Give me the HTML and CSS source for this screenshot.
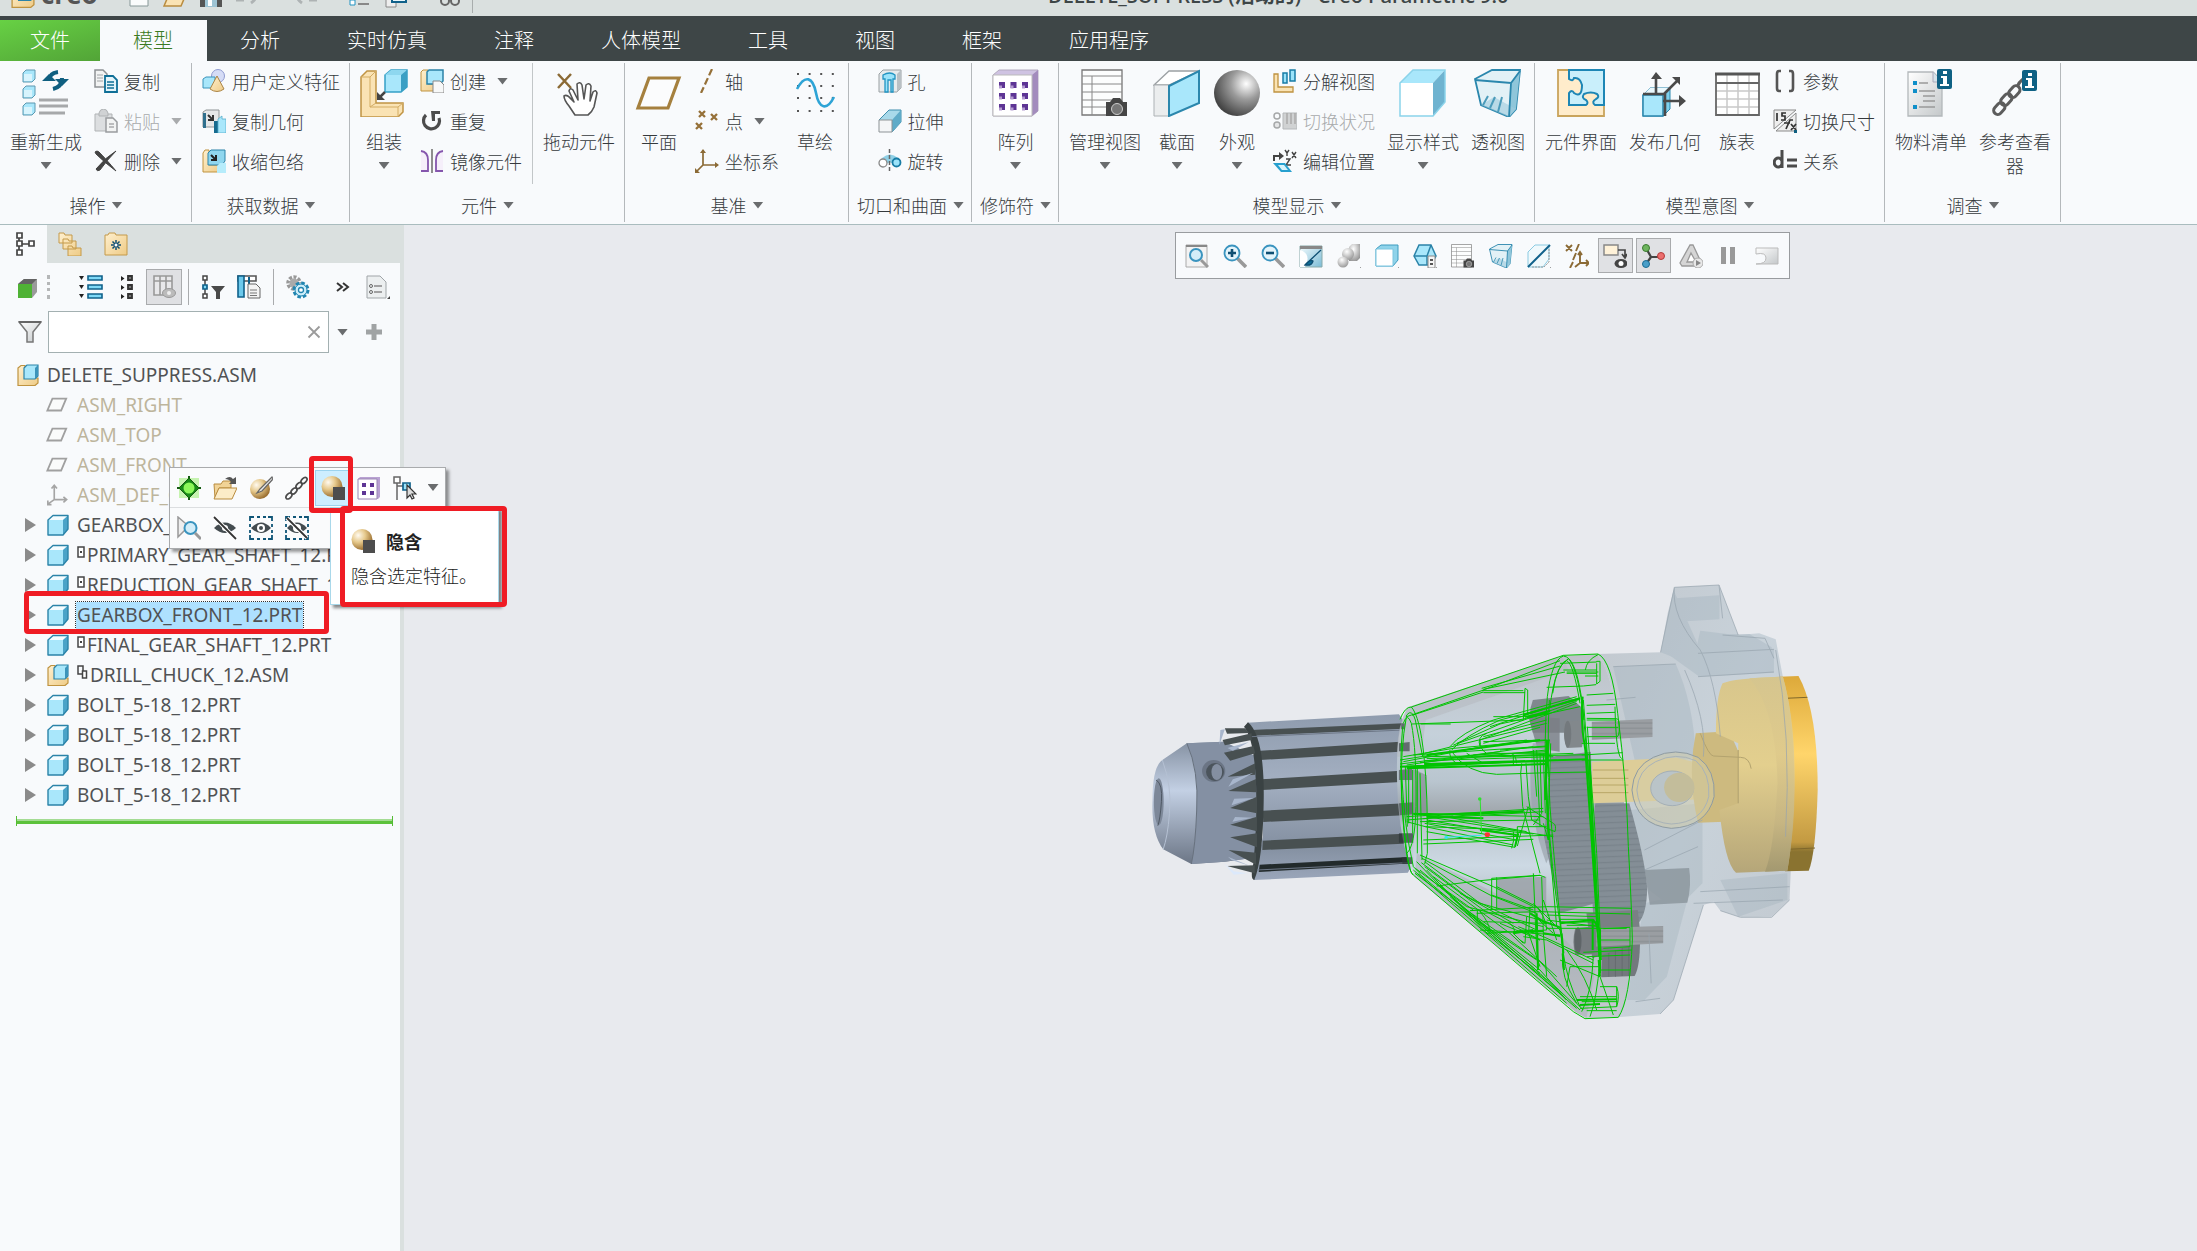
FILE: index.html
```html
<!DOCTYPE html>
<html lang="zh-CN">
<head>
<meta charset="utf-8">
<title>DELETE_SUPPRESS (活动的) - Creo Parametric 9.0</title>
<link rel="stylesheet" href="styles.css">
</head>
<body>
<svg class="defs" aria-hidden="true">
<defs>
<linearGradient id="gGold" x1="0" y1="0" x2="1" y2="1"><stop offset="0" stop-color="#fff0cf"/><stop offset="1" stop-color="#eecb86"/></linearGradient>
<linearGradient id="gGrey" x1="0" y1="0" x2="1" y2="1"><stop offset="0" stop-color="#fff"/><stop offset="1" stop-color="#c4c8ca"/></linearGradient>
<linearGradient id="gBlue" x1="0" y1="0" x2="1" y2="1"><stop offset="0" stop-color="#f4fbfd"/><stop offset="1" stop-color="#7bbcd6"/></linearGradient>
<radialGradient id="gBall" cx=".7" cy=".3" r=".75"><stop offset="0" stop-color="#fff"/><stop offset=".45" stop-color="#9b9b9b"/><stop offset="1" stop-color="#444"/></radialGradient>
<radialGradient id="gGoldBall" cx=".32" cy=".3" r=".75"><stop offset="0" stop-color="#fffaf0"/><stop offset=".45" stop-color="#e6c98c"/><stop offset="1" stop-color="#96692a"/></radialGradient>
<radialGradient id="gSoftBall" cx=".4" cy=".3" r=".8"><stop offset="0" stop-color="#fff"/><stop offset="1" stop-color="#8d8d8d"/></radialGradient>

<symbol id="part" viewBox="0 0 22 22"><path d="M1 6 6 1.500H21V15l-5 6H1z" fill="#a9e7fb"/><path d="M1 6 6 1.500H21L16 6z" fill="#f4fcff"/><path d="M16 6l5-4.500V15l-5 6z" fill="#4aa3c8"/><path d="M1 6 6 1.500H21V15l-5 6H1z" fill="none" stroke="#2b83a8" stroke-width="1.400" stroke-linejoin="round"/></symbol>
<symbol id="asm" viewBox="0 0 22 22"><path d="M1 4 4 1.500h4V14h13v5l-3 2.500H1z" fill="url(#gGold)" stroke="#bf9340" stroke-width="1.200"/><path d="M7 4l3-3h11v11l-3 3H7z" fill="#a9e7fb" stroke="#2b83a8" stroke-width="1.200"/><path d="M18 4l3-3v11l-3 3z" fill="#3b94bb"/></symbol>
<symbol id="plane" viewBox="0 0 24 24"><path d="M7 5h15l-5.500 13H1.500z" fill="#fafbfb" stroke="#a0a0a0" stroke-width="2"/></symbol>
<symbol id="csys-grey" viewBox="0 0 24 24"><path d="M9 2v15h13M9 17l-7 5M6 5l3-3.500L12 5M19 14l3.500 3-3.500 3M2 18v4.500h4" fill="none" stroke="#a5a5a5" stroke-width="1.800"/></symbol>
<symbol id="mk1" viewBox="0 0 8 12"><path d="M1 1h6v10H1z" fill="#fff" stroke="#444" stroke-width="1.500"/><path d="M3 5h2v2H3z" fill="#444"/></symbol>
<symbol id="mk2" viewBox="0 0 11 14"><path d="M1 1h5v8H1z" fill="none" stroke="#444" stroke-width="1.500"/><path d="M5.500 6h4v7h-4z" fill="#fff" stroke="#444" stroke-width="1.500"/></symbol>

<symbol id="regen" viewBox="0 0 48 48"><g fill="#a9e7fb" stroke="#5c98b0" stroke-width="1"><path d="M1 4l3-3h9v9l-3 3H1zM1 20l3-3h9v9l-3 3H1zM1 37l3-3h9v9l-3 3H1z"/></g><g fill="#fff"><path d="M2 5h8v7H2zM2 21h8v7H2zM2 38h8v7H2z" opacity=".55"/></g><path d="M17 31h29M17 37h29M17 44h26" stroke="#a6a8aa" stroke-width="3"/><g fill="none" stroke="#0f5f80" stroke-width="4"><path d="M27 12q0-8 9-9"/><path d="M40 9q0 9-9 11"/></g><path d="M20 12h14l-7-7zM33 10h14l-7 7z" fill="#0f5f80"/></symbol>
<symbol id="copy" viewBox="0 0 24 24"><path d="M1 1h8l4 4v13H1z" fill="#f2f3f3" stroke="#8d9194" stroke-width="1.500"/><path d="M3 6h6M3 9h6M3 12h6" stroke="#a0a4a6"/><path d="M11 7h8l4 4v12H11z" fill="#e3f4fa" stroke="#0f6f97" stroke-width="1.800"/><path d="M13 13h7M13 16h7M13 19h7" stroke="#0f6f97" stroke-width="1.300"/></symbol>
<symbol id="paste" viewBox="0 0 24 24"><path d="M1 5h17v17H1z" fill="#dcdee0" stroke="#b0b3b5"/><path d="M5 4q1-4 4.500-4T14 4v3H5z" fill="#d0d2d4" stroke="#b0b3b5"/><path d="M12 9h7l4 4v10H12z" fill="#f2f3f3" stroke="#999c9f" stroke-width="1.500"/><path d="M15 15h5M15 18h5" stroke="#a9abad" stroke-width="1.500"/></symbol>
<symbol id="del" viewBox="0 0 24 24"><path d="M1 3q2-2 4 0 7 7 17 19Q10 13 2 5z" fill="#444" stroke="#444"/><path d="M22 2Q12 8 2 20q1 3 4 1Q13 11 22 2z" fill="#444" stroke="#444"/></symbol>
<symbol id="udf" viewBox="0 0 24 24"><circle cx="16" cy="7" r="6.500" fill="#d5dcf6" stroke="#8f9bd0"/><path d="M1 10l3-2h9v11H1z" fill="#a9e7fb" stroke="#3b94bb"/><path d="M15 7l7 13q-7 5-14 0z" fill="url(#gGold)" stroke="#ab8445"/></symbol>
<symbol id="cgeom" viewBox="0 0 24 24"><path d="M1 3l3-2h13v17H1z" fill="#e5e7e8" stroke="#8f9496"/><path d="M1 4h3v15H1z" fill="#2f6f8d"/><path d="M6 6l5 5m0-5v5H6" stroke="#333" stroke-width="2" fill="none"/><path d="M12 12h4v12h-4z" fill="#176b8f"/><path d="M16 10l4-3v3h4v14h-8z" fill="#a9e7fb" stroke="#55adcb" stroke-width=".8"/></symbol>
<symbol id="shrink" viewBox="0 0 24 24"><path d="M1 4l2-3h4v15h12v7H1z" fill="url(#gGold)" stroke="#bf9340"/><path d="M6 4l3-3h14v11l-3 4H6z" fill="#8fd6ee" stroke="#2b83a8"/><path d="M9 6l5 5m0-5v5H9" stroke="#222" stroke-width="2" fill="none"/><path d="M15 17l3-3h6v10h-9z" fill="#b6ecfb"/></symbol>
<symbol id="assemble" viewBox="0 0 48 48"><path d="M1 8l6-6h9v32h27v9l-5 5H1z" fill="#fae3b4" stroke="#c09443" stroke-width="1.500"/><path d="M1 8h9l6-6M10 8v30l6-4M10 38h28l5-4M38 38v10" fill="none" stroke="#d3ac63"/><path d="M25 6l6-5h16v17l-6 5H25z" fill="#a9e7fb" stroke="#35a0c6" stroke-width="1.500"/><path d="M25 6l6-5h16l-6 5z" fill="#8ed7ef"/><path d="M41 6l6-5v17l-6 5z" fill="#3a9fc4"/><path d="M25 23l-6 6" stroke="#444" stroke-width="2.500"/><path d="M17 23v8h8z" fill="#444"/></symbol>
<symbol id="create" viewBox="0 0 24 24"><path d="M1 3l2-2h5v14h12v7H1z" fill="url(#gGold)" stroke="#bf9340"/><path d="M7 3l2-2h14v11l-3 3H7z" fill="#a9e7fb" stroke="#2b83a8" stroke-width="1.500"/><path d="M13 12h7l4 4v8H13z" fill="#f7f8f8" stroke="#888"/></symbol>
<symbol id="repeat" viewBox="0 0 24 24"><path d="M6 6a8 8 0 1 0 13 3" fill="none" stroke="#4c4c4c" stroke-width="3.200"/><path d="M11 2h9v3h-5v7h-3z" fill="#4c4c4c"/></symbol>
<symbol id="mirror" viewBox="0 0 24 24"><path d="M12 0v24" stroke="#8e8e8e" stroke-width="2"/><path d="M1 2q7 1 7 9v11H1M23 2q-7 1-7 9v11h7" fill="#f5effa" stroke="#8556ad" stroke-width="1.800"/></symbol>
<symbol id="drag" viewBox="0 0 48 48"><path d="M3 5l13 14M16 5L3 19" stroke="#8b6a35" stroke-width="2.500"/><path d="M20 46l-6-9q-5-6-5-10 3-2 7 3l3 3-5-11q1-4 4-1l5 10-1-16q3-3 5 1l2 14 2-14q3-3 5 1l-1 15 3-9q3-3 4 1l-3 14q-2 5-6 8z" fill="#fff" stroke="#555" stroke-width="1.600" stroke-linejoin="round"/></symbol>
<symbol id="bigplane" viewBox="0 0 48 48"><path d="M14 9h30L33 39H3z" fill="#fbfcfd" stroke="#a5803e" stroke-width="3.200"/></symbol>
<symbol id="axis" viewBox="0 0 24 24"><path d="M17 0L6 24" stroke="#957038" stroke-width="2.200" stroke-dasharray="7 3"/></symbol>
<symbol id="points" viewBox="0 0 24 24"><path d="M4 2l6 6m0-6L4 8M16 5l6 6m0-6l-6 6M1 14l6 6m0-6l-6 6" stroke="#957038" stroke-width="2.300"/></symbol>
<symbol id="csys" viewBox="0 0 24 24"><path d="M8 1v15h15M8 16l-7 7" fill="none" stroke="#8b6a35" stroke-width="1.700"/><path d="M5 4l3-4 3 4zM20 13l4 3-4 3zM0 19v5h5z" fill="#8b6a35"/></symbol>
<symbol id="sketch" viewBox="0 0 48 48"><path d="M6 5h37M6 17h37M6 29h37M6 42h37" stroke="#555" stroke-width="2" stroke-dasharray="2 9.600"/><path d="M6 20C14 5 22 8 25 24s11 18 18 4" fill="none" stroke="#2ea4d6" stroke-width="2.600"/></symbol>
<symbol id="hole" viewBox="0 0 24 24"><path d="M1 5l4-4h18v18l-4 4H1z" fill="#e7ebed" stroke="#9aa0a3"/><path d="M19 5l4-4v18l-4 4z" fill="#b9c0c4"/><path d="M5 6q7-4 12 0v4h-2v13h-2V11h-3v12H7V10H5z" fill="#9be3fa" stroke="#2294c2" stroke-width="1.300"/></symbol>
<symbol id="extrude" viewBox="0 0 24 24"><path d="M1 11L11 1h12v12L14 23z" fill="#a8d9ea" stroke="#3f8fae"/><path d="M14 11l9-10v12l-9 10z" fill="#5fabc8"/><path d="M1 11h13v12H1z" fill="#f4f6f7" stroke="#8d9396"/></symbol>
<symbol id="revolve" viewBox="0 0 24 24"><path d="M4 9q8-7 16 0v8q-8-7-16 0z" fill="#8fd0e6"/><path d="M11.500 0v24" stroke="#666" stroke-width="1.500" stroke-dasharray="4 2"/><circle cx="5" cy="14" r="4" fill="#fff" stroke="#888" stroke-width="1.300"/><circle cx="18.500" cy="13.500" r="4" fill="#9be3fa" stroke="#187ca5" stroke-width="1.800"/></symbol>
<symbol id="pattern" viewBox="0 0 48 48"><path d="M1 6l6-5h39v41l-6 5H1z" fill="#cfc3e2" stroke="#b3aabf"/><path d="M40 6l6-5v41l-6 5z" fill="#a38cbd"/><path d="M1 6h39v41H1z" fill="#fff" stroke="#bbb"/><path d="M7 16h31M7 27h31M7 38h31" stroke="#5e3595" stroke-width="6" stroke-dasharray="6 5.500"/><path d="M7 18h31M7 29h31M7 40h31" stroke="#b39bd0" stroke-width="3" stroke-dasharray="3 8.500"/></symbol>
<symbol id="mview" viewBox="0 0 48 48"><path d="M1 1h40v45H1z" fill="#fcfdfd" stroke="#777" stroke-width="1.300"/><path d="M1 7h40M1 15h40M1 23h40M1 31h40M1 38h40M11 7v39" stroke="#888"/><path d="M25 33h4l3-4h7l3 4h4v14H25z" fill="#454545"/><circle cx="36" cy="40" r="5.500" fill="#777" stroke="#ccc"/></symbol>
<symbol id="section" viewBox="0 0 48 48"><path d="M1 16L16 2h30L16 16z" fill="#fff" stroke="#9ba0a3" stroke-width="1.300"/><path d="M1 16h15v31H1z" fill="#ebedee" stroke="#adb2b5"/><path d="M16 17L46 2v32L16 47z" fill="#a9e7fb" stroke="#2b87ad" stroke-width="2"/></symbol>
<symbol id="ball" viewBox="0 0 48 48"><circle cx="24" cy="24" r="23" fill="url(#gBall)"/></symbol>
<symbol id="explode" viewBox="0 0 24 24"><path d="M1 5h4v13h15v5H1z" fill="#fae3b4" stroke="#bf9340" stroke-width="1.300"/><path d="M10 4h4v10h-4zM17 1h5v11h-5z" fill="#9be3fa" stroke="#187ca5" stroke-width="1.500"/></symbol>
<symbol id="state" viewBox="0 0 24 24"><path d="M10 4h14v16H10z" fill="#d0d2d3" stroke="#b5b8ba"/><path d="M14 4v11M18 4v11M22 4v11" stroke="#aaa" stroke-width="1.500"/><circle cx="4" cy="7" r="3" fill="none" stroke="#a6a8a9" stroke-width="1.500"/><circle cx="4" cy="16" r="3" fill="#e4e5e6" stroke="#a6a8a9" stroke-width="1.500"/></symbol>
<symbol id="editpos" viewBox="0 0 24 24"><path d="M1 12V7h6" fill="none" stroke="#444" stroke-width="2"/><path d="M6 3l5 4-5 4z" fill="#444"/><path d="M12 1l2 3 2-3M14 4v3M19 3l4 6m0-6l-4 6M13 10h4l-4 6h5" fill="none" stroke="#444" stroke-width="1.400"/><path d="M0 14h12l7 9H8z" fill="#27a0cf"/><path d="M5 16h6l4 5H9z" fill="#d7f2fb"/></symbol>
<symbol id="style" viewBox="0 0 48 48"><path d="M1 14L14 1h32L34 14z" fill="#a9e7fb"/><path d="M34 14L46 1v32L34 47z" fill="#6fb3d0"/><path d="M1 14h33v33H1z" fill="#fff"/><path d="M1 14L14 1h32v32L34 47H1z" fill="none" stroke="#8bd3ea" stroke-width="1.500"/></symbol>
<symbol id="persp" viewBox="0 0 48 48"><path d="M1 10L18 1h28l-4 39-7 8L7 36z" fill="#e2f1f6" stroke="#2b87ad" stroke-width="1.800"/><path d="M37 14l9-12-4 38-7 8z" fill="#8fc6da"/><path d="M18 2l2 26L7 36l28 12 7-8-22-12" fill="#9ecbdd" opacity=".6"/><path d="M14 27l-5 9M21 28l-5 11M28 28l-4 15" stroke="#4b9bba" stroke-width="2"/><path d="M1 11l36 3 9-12M37 14l-2 34" fill="none" stroke="#2b87ad" stroke-width="1.800"/></symbol>
<symbol id="iface" viewBox="0 0 48 48"><path d="M1 1h46v46H1z" fill="#ffeccb" stroke="#c9a45c" stroke-width="1.800"/><path d="M12 1h35v35h-9q-4-3 1-6 4-2 1-5-6-3-13 0-3 4 2 6 3 3 0 5H12V24q3-4 5 0 8 5 8-8-2-8-8-7-1 4-5 1z" fill="#c9effb" stroke="#1d86b5" stroke-width="2"/></symbol>
<symbol id="publish" viewBox="0 0 48 48"><path d="M2 26l7-7h20v21l-7 7H2z" fill="#7fd0ec" stroke="#2b87ad"/><path d="M2 26l7-7h20l-7 7z" fill="#eaf8fd"/><path d="M2 26h20v21H2z" fill="#a9e7fb" stroke="#2b87ad" stroke-width="1.500"/><path d="M2 25h22v22M15 25V6M23 25L37 11M22 32h18" stroke="#4a4a4a" stroke-width="2.600" fill="none"/><path d="M10 10l5-7 6 7zM31 8h8v8zM38 26l7 6-7 6z" fill="#4a4a4a"/></symbol>
<symbol id="ftable" viewBox="0 0 48 48"><path d="M3 5h43v41H3z" fill="#fff"/><path d="M14 5v41M25 5v41M36 5v41M3 22h43M3 30h43M3 38h43" stroke="#c9c9c9" stroke-width="1.500"/><path d="M3 5h43v41H3zM3 14h43" fill="none" stroke="#666" stroke-width="1.800"/><path d="M2 5h45" stroke="#555" stroke-width="3"/></symbol>
<symbol id="params" viewBox="0 0 24 24"><path d="M8 2H6Q4 2 4 5v14q0 3 2 3h2M16 2h2q2 0 2 3v14q0 3-2 3h-2" fill="none" stroke="#555" stroke-width="2.600"/></symbol>
<symbol id="swdim" viewBox="0 0 24 24"><path d="M1 1h22L1 20zM23 4v18H3z" fill="#eee" stroke="#8a8a8a"/><path d="M4 4v8M13 4H9v3h3v4H8M13 20l4-9h3M11 14h6M18 15l5 6m0-6l-5 6" fill="none" stroke="#333" stroke-width="1.700"/><path d="M21 21h3v3h-3z" fill="#0f5f80"/></symbol>
<symbol id="rel" viewBox="0 0 24 24"><path d="M9 1v18M9 12a4 4.500 0 1 0 0 3" fill="none" stroke="#4b4b4b" stroke-width="3"/><path d="M14 11h10M14 17h10" stroke="#4b4b4b" stroke-width="3"/></symbol>
<symbol id="bom" viewBox="0 0 48 48"><path d="M1 3h25l9 9v35H1z" fill="url(#gGrey)" stroke="#b3b8bb" stroke-width="1.300"/><path d="M26 3v10h9" fill="#d6e3ea" stroke="#aab"/><path d="M12 14h9M12 22h16M16 27h12M16 32h12M12 38h16" stroke="#999" stroke-width="1.600"/><path d="M6 12h4v4H6zM6 20h4v4H6zM6 36h4v4H6z" fill="#0f8fc9"/><rect x="30" y="0" width="15" height="20" rx="2" fill="#0f6184"/><path d="M36 2h4v3h-4zM34 7h6v8h2v2h-9v-2h3V9h-2z" fill="#fff"/></symbol>
<symbol id="refv" viewBox="0 0 48 48"><g fill="none" stroke="#5c5c5c" stroke-width="3"><rect x="2" y="36" width="13" height="8" rx="4" transform="rotate(-48 8 40)"/><rect x="9" y="27" width="13" height="8" rx="4" transform="rotate(-48 15 31)"/><rect x="17" y="19" width="13" height="8" rx="4" transform="rotate(-48 23 23)"/><path d="M26 18q2-5 6-8"/></g><rect x="31" y="1" width="15" height="21" rx="2" fill="#0f6184"/><path d="M37 4h4v3h-4zM35 9h6v8h2v2h-9v-2h3v-6h-2z" fill="#fff"/></symbol>

<symbol id="treetab" viewBox="0 0 24 24"><path d="M4 1h5v5H4zM4 9h5v5H4zM4 18h5v5H4zM16 9h5v5h-5zM6 6v3M6 14v4M9 12h7" fill="#fff" stroke="#444" stroke-width="1.700"/></symbol>
<symbol id="folders" viewBox="0 0 24 24"><g fill="url(#gGold)" stroke="#c49a4b"><path d="M1 1h5l1 2h7v8H1zM5 7h5l1 2h7v8H5zM10 14h4l1 2h8v8H10z"/></g></symbol>
<symbol id="favfolder" viewBox="0 0 24 24"><path d="M1 3h3l1-2h6l1 2h11v20H1z" fill="url(#gGold)" stroke="#c49a4b"/><path d="M12 8v10M7 13h10M8.500 9.500l7 7M15.500 9.500l-7 7" stroke="#0f4f73" stroke-width="1.500"/><circle cx="12" cy="13" r="1.500" fill="#fff"/></symbol>
<symbol id="greencube" viewBox="0 0 24 24"><path d="M2 9l6-5h13v13l-5 6H2z" fill="#9a9a9a"/><path d="M2 9l6-5h13l-5 5z" fill="#636363"/><path d="M2 9h14v14H2z" fill="#4fb235"/></symbol>
<symbol id="expand" viewBox="0 0 24 24"><path d="M0 1h5L2.500 5zM0 10h5l-2.500 4zM0 19h5l-2.500 4z" fill="#222"/><path d="M9 1h14v4H9zM9 10h14v4H9zM9 19h14v4H9z" fill="#7fd9f7" stroke="#10618a" stroke-width="1.600"/></symbol>
<symbol id="collapse" viewBox="0 0 24 24"><path d="M6 1v5l3.500-2.500zM6 10v5l3.500-2.500zM6 19v5l3.500-2.500z" fill="#222"/><path d="M13 1h4v4h-4zM13 10h4v4h-4zM13 19h4v4h-4z" fill="#777" stroke="#333" stroke-width="1.800"/></symbol>
<symbol id="coleye" viewBox="0 0 24 24"><path d="M2 1h18v19H2zM2 6h18M8 1v19M14 1v19" fill="#e8e8ea" stroke="#999" stroke-width="1.600"/><ellipse cx="17" cy="18" rx="6.500" ry="4.500" fill="#bbb" stroke="#999"/><circle cx="17" cy="18" r="2" fill="#eee"/></symbol>
<symbol id="treefilter" viewBox="0 0 24 24"><path d="M2 1h4v4H2zM2 19h4v4H2zM4 5v14" fill="#fff" stroke="#444" stroke-width="1.500"/><path d="M2 10h4v4H2z" fill="#7fd9f7" stroke="#10618a" stroke-width="1.700"/><path d="M10 11h14l-5 6v7h-4v-7z" fill="#4a4a4a"/></symbol>
<symbol id="coldoc" viewBox="0 0 24 24"><path d="M1 1h18v5H1z" fill="#fff" stroke="#555" stroke-width="1.600"/><path d="M1 1h6v21H1z" fill="#6cc9ec" stroke="#10618a" stroke-width="1.600"/><path d="M12 2v8" stroke="#10618a" stroke-width="2"/><path d="M11 9h8l4 4v10H11z" fill="#f4f4f4" stroke="#666"/><path d="M13 15h7M13 18h7M13 20.500h7" stroke="#777"/></symbol>
<symbol id="gears" viewBox="0 0 24 24"><circle cx="8" cy="8" r="6" fill="none" stroke="#999" stroke-width="3.500" stroke-dasharray="3 1.500"/><circle cx="8" cy="8" r="4.500" fill="#aaa"/><circle cx="15" cy="15" r="7" fill="#cdeefa" stroke="#2285b0" stroke-width="3" stroke-dasharray="3.500 2"/><circle cx="15" cy="15" r="6" fill="#cdeefa" stroke="#2285b0" stroke-width="1"/><circle cx="15" cy="15" r="2.500" fill="#fff" stroke="#2285b0" stroke-width="1.300"/></symbol>
<symbol id="chev" viewBox="0 0 24 24"><path d="M7 8l5 4-5 4M13 8l5 4-5 4" fill="none" stroke="#333" stroke-width="2"/></symbol>
<symbol id="doclist" viewBox="0 0 24 24"><path d="M1 1h13l6 6v16H1z" fill="#eceff0" stroke="#a0a5a8"/><path d="M8 11h8M8 17h8" stroke="#888" stroke-width="1.500"/><circle cx="5" cy="11" r="1.500" fill="none" stroke="#666"/><circle cx="5" cy="17" r="1.500" fill="none" stroke="#666"/><path d="M24 21v4h-4z" fill="#444"/></symbol>
<symbol id="funnel" viewBox="0 0 24 24"><path d="M1 2h22l-8 10v10H9V12z" fill="url(#gGrey)" stroke="#777" stroke-width="1.500"/><path d="M1 2h22" stroke="#666" stroke-width="2"/></symbol>
<symbol id="plus" viewBox="0 0 18 18"><path d="M6.500 1h5v5.500H17v5h-5.500V17h-5v-5.500H1v-5h5.500z" fill="#a0a3a4"/></symbol>
<symbol id="clear" viewBox="0 0 14 14"><path d="M1.500 1.500l11 11M12.500 1.500l-11 11" stroke="#9b9b9b" stroke-width="1.800"/></symbol>

<symbol id="refit" viewBox="0 0 24 24"><path d="M1 1h21v22H1z" fill="#f3f3f3" stroke="#aaa"/><path d="M1 2h21" stroke="#888" stroke-width="2"/><circle cx="11" cy="11" r="6" fill="#d3edf8" stroke="#3a94bf" stroke-width="2"/><path d="M16 16l7 7" stroke="#999" stroke-width="3"/></symbol>
<symbol id="zin" viewBox="0 0 24 24"><path d="M14 14l9 9" stroke="#999" stroke-width="3.600"/><circle cx="9" cy="9" r="7.500" fill="#e4f4fb" stroke="#3a94bf" stroke-width="1.800"/><path d="M5 9h8M9 5v8" stroke="#0f4f73" stroke-width="2.600"/></symbol>
<symbol id="zout" viewBox="0 0 24 24"><path d="M14 14l9 9" stroke="#999" stroke-width="3.600"/><circle cx="9" cy="9" r="7.500" fill="#e4f4fb" stroke="#3a94bf" stroke-width="1.800"/><path d="M5 9h8" stroke="#0f4f73" stroke-width="2.600"/></symbol>
<symbol id="repaint" viewBox="0 0 24 24"><path d="M1 2h22v21H1z" fill="url(#gBlue)" stroke="#8aa" /><path d="M1 2h22v3H1z" fill="#888"/><path d="M1 6q12 4 5 17H1z" fill="#fff"/><path d="M7 20L22 6M6 21q5-6 8-4-1 5-8 4z" stroke="#0f4f73" fill="#0f6f97" stroke-width="1.300"/></symbol>
<symbol id="render" viewBox="0 0 24 24"><path d="M12 3l3-3h8v14l-3 3h-8z" fill="url(#gSoftBall)"/><circle cx="11" cy="10" r="6" fill="url(#gSoftBall)"/><circle cx="6" cy="18" r="5.500" fill="url(#gSoftBall)"/><path d="M26 21v4h-4z" fill="#444"/></symbol>
<symbol id="dstyle" viewBox="0 0 24 24"><path d="M1 5l5-4h17v15l-5 6H1z" fill="#8fd3ea" stroke="#3f9cbf"/><path d="M1 5h17v17H1z" fill="#fff" stroke="#7cc6e0"/><path d="M26 21v4h-4z" fill="#444"/></symbol>
<symbol id="orient" viewBox="0 0 24 24"><path d="M6 1h12l5 11-5 9H6L1 12z" fill="#a9e7fb" stroke="#2b83a8" stroke-width="1.500"/><path d="M1 12h13l4-11M14 12v9" fill="none" stroke="#2b83a8" stroke-width="1.500"/><path d="M15 12h7v12h-7z" fill="#f5f5f5" stroke="#888"/><path d="M17 15h3v2h-3zM17 19h3v2h-3z" fill="#555"/><path d="M26 21v4h-4z" fill="#444"/></symbol>
<symbol id="datum" viewBox="0 0 24 24"><path d="M1 8l7-7h14v14l-6 8H1z" fill="#f0f9fc" stroke="#8bcbe2"/><path d="M22 5v13l-5 5H5" fill="none" stroke="#999" stroke-dasharray="2 1"/><path d="M1 23L23 1" stroke="#10618a" stroke-width="2"/><path d="M26 21v4h-4z" fill="#444"/></symbol>
<symbol id="dfilter" viewBox="0 0 24 24"><path d="M1 1l6 6m0-6L1 7M14 0l-3 7M11 9l-3 7M8 18l-3 6M15 9v10h9M15 19l-5 4M13 11l2-3 2 3M21 16l3 3-3 3" fill="none" stroke="#8b6a35" stroke-width="1.900"/><path d="M26 22v4h-4z" fill="#444"/></symbol>
<symbol id="annot" viewBox="0 0 24 24"><path d="M1 1h14v10H1z" fill="#fff2d9" stroke="#888" stroke-width="1.500"/><path d="M15 6h7v6M19 10l3 4 2-4" fill="none" stroke="#444" stroke-width="1.700"/><ellipse cx="18" cy="19.500" rx="6.500" ry="4.500" fill="#444"/><circle cx="18" cy="19.500" r="2.500" fill="#fff"/></symbol>
<symbol id="spin" viewBox="0 0 24 24"><path d="M5 4l5 9 11 0M10 13l-5 7" stroke="#444" stroke-width="2.200" fill="none"/><circle cx="5" cy="4" r="3.500" fill="#6fb55f" stroke="#3b7b30"/><circle cx="20" cy="12" r="3.500" fill="#ec6e6e" stroke="#b33a3a"/><circle cx="5" cy="20" r="3.500" fill="#4a9fc9" stroke="#1b6c94"/></symbol>
<symbol id="sim" viewBox="0 0 24 24"><path d="M11 1h3l8 17-2 4H3l-2-3z" fill="#d5d5d5" stroke="#999" stroke-width="1.300"/><path d="M12 9l5 9H8z" fill="#fff" stroke="#999" stroke-width="1.300"/><circle cx="19" cy="19" r="5" fill="#e8e8e8" stroke="#aaa"/><path d="M17 16v6l5-3z" fill="#888"/></symbol>
<symbol id="pause" viewBox="0 0 24 24"><path d="M4 3h5v17H4zM13 3h5v17h-5z" fill="#999"/></symbol>
<symbol id="last" viewBox="0 0 24 24"><path d="M1 4h22v16H1q10 0 10-6T1 10z" fill="url(#gGrey)" stroke="#bbb"/></symbol>

<symbol id="activate" viewBox="0 0 24 24"><path d="M2 2h20v20H2z" fill="#c6f3b0"/><path d="M12 0v24M0 12h24" stroke="#155c12" stroke-width="2"/><path d="M12 2l10 10-10 10L2 12z" fill="#178a17" stroke="#155c12"/><circle cx="12" cy="12" r="5.500" fill="#8cf75a"/></symbol>
<symbol id="openf" viewBox="0 0 24 24"><path d="M1 8h7l2-3h8v7H6L2 22z" fill="#f1d396" stroke="#b98c3f"/><path d="M6 12h18l-5 11H1z" fill="#fcecc8" stroke="#b98c3f"/><path d="M12 3q5-4 8 0l3-2v7h-7l2-2q-2-3-6-3z" fill="#555"/></symbol>
<symbol id="editdef" viewBox="0 0 24 24"><circle cx="11" cy="13" r="10" fill="url(#gGoldBall)"/><path d="M23 1L11 13l-3 4 5-2L24 3z" fill="#e8e8e8" stroke="#666" stroke-width="1.200"/></symbol>
<symbol id="chain" viewBox="0 0 24 24"><g fill="none" stroke="#4a4a4a" stroke-width="1.700"><ellipse cx="4" cy="20" rx="3.600" ry="2.200" transform="rotate(-45 4 20)"/><ellipse cx="9" cy="15" rx="3.600" ry="2.200" transform="rotate(-45 9 15)"/><ellipse cx="14" cy="9.500" rx="3.600" ry="2.200" transform="rotate(-45 14 9.500)"/><ellipse cx="19" cy="4.500" rx="3.600" ry="2.200" transform="rotate(-45 19 4.500)"/></g></symbol>
<symbol id="suppress" viewBox="0 0 24 24"><circle cx="11" cy="10.500" r="10.500" fill="url(#gGoldBall)"/><path d="M12 11h12v13H12z" fill="#4d4d4d"/></symbol>
<symbol id="patmini" viewBox="0 0 24 24"><path d="M1 3l2-2h20v20l-2 2H1z" fill="#b9a2d2"/><path d="M1 3h19v20H1z" fill="#fff" stroke="#9a86b5"/><path d="M5 7h4v4H5zM13 7h4v4h-4zM5 15h4v4H5zM13 15h4v4h-4z" fill="#5e3595"/></symbol>
<symbol id="selparent" viewBox="0 0 24 24"><path d="M1 1h6v6H1z" fill="#fff" stroke="#666" stroke-width="1.500"/><path d="M4 7v17M4 10h6" stroke="#666" stroke-width="1.500"/><path d="M10 7h7v7h-7z" fill="#9be3fa" stroke="#10618a" stroke-width="1.700"/><path d="M14 9l9 9h-4l2 4-2 1-2-4-3 3z" fill="#ddd" stroke="#333" stroke-width="1.200"/></symbol>
<symbol id="zoomsel" viewBox="0 0 24 24"><path d="M1 1l14 12H9l-8 8z" fill="#eee" stroke="#999" stroke-width="1.500"/><circle cx="13.500" cy="12" r="6" fill="#d3edf8" stroke="#3a94bf" stroke-width="2"/><path d="M18 17l6 6" stroke="#999" stroke-width="3"/></symbol>
<symbol id="hide" viewBox="0 0 24 24"><path d="M1 12q11-11 22 0-11 10-22 0z" fill="#444c50"/><circle cx="12" cy="12" r="3" fill="#fff"/><path d="M1 1l22 22" stroke="#fff" stroke-width="4"/><path d="M1 1l22 22" stroke="#333" stroke-width="1.800"/></symbol>
<symbol id="frame" viewBox="0 0 24 24"><path d="M5 1H1v4M19 1h4v4M5 23H1v-4M19 23h4v-4M8 1h3M14 1h3M8 23h3M14 23h3M1 8v3M1 14v3M23 8v3M23 14v3" fill="none" stroke="#0f5577" stroke-width="1.800"/></symbol>
<symbol id="show" viewBox="0 0 24 24"><use href="#frame"/><path d="M2 12q10-11 20 0-10 10-20 0z" fill="#444c50"/><circle cx="12" cy="12" r="4" fill="#fff"/><circle cx="12" cy="12" r="2" fill="#444c50"/></symbol>
<symbol id="hideall" viewBox="0 0 24 24"><use href="#frame"/><path d="M2 12q10-11 20 0-10 10-20 0z" fill="#444c50"/><circle cx="12" cy="12" r="4" fill="#fff"/><path d="M2 2l20 20" stroke="#fff" stroke-width="4"/><path d="M2 2l20 20" stroke="#333" stroke-width="1.800"/></symbol>

<symbol id="t-new" viewBox="0 0 24 24"><path d="M3 0h18v22H3z" fill="#fafcfc" stroke="#899"/></symbol>
<symbol id="t-open" viewBox="0 0 24 24"><path d="M7 8h17l-6 14H1z" fill="#fae3b4" stroke="#b98c3f" stroke-width="1.500"/></symbol>
<symbol id="t-save" viewBox="0 0 24 24"><path d="M1 1h22v22H1z" fill="#555"/><path d="M6 12h12v11H6z" fill="#9ec4d4"/><path d="M9 14h4v8H9z" fill="#fff"/></symbol>
<symbol id="t-undo" viewBox="0 0 24 24"><path d="M1 16h8M16 19q6-4 5-10" fill="none" stroke="#aeb3b4" stroke-width="3"/></symbol>
<symbol id="t-redo" viewBox="0 0 24 24"><path d="M15 16h8M8 19q-6-4-5-10" fill="none" stroke="#aeb3b4" stroke-width="3"/></symbol>
<symbol id="t-list" viewBox="0 0 24 24"><path d="M2 16h5v5H2z" fill="#fff" stroke="#2294c2"/><path d="M10 14h13M10 20h11" stroke="#888" stroke-width="2"/></symbol>
<symbol id="t-win" viewBox="0 0 24 24"><path d="M2 14h10v9H2z" fill="#eee" stroke="#888"/><path d="M8 6h14v12H8z" fill="#e9f7fc" stroke="#10618a" stroke-width="2"/></symbol>
<symbol id="t-glass" viewBox="0 0 24 24"><circle cx="7" cy="17" r="4" fill="none" stroke="#666" stroke-width="2"/><circle cx="17" cy="17" r="4" fill="none" stroke="#666" stroke-width="2"/></symbol>
</defs>
</svg>

<header class="titlebar">
  <div class="titlebar-inner">
    <svg class="i24 logo"><use href="#asm"/></svg><span class="brand">creo</span>
    <div class="quick">
      <svg class="i24"><use href="#t-new"/></svg><svg class="i24"><use href="#t-open"/></svg><svg class="i24"><use href="#t-save"/></svg><svg class="i24"><use href="#t-undo"/></svg>
    </div>
    <div class="quick far">
      <svg class="i24"><use href="#t-redo"/></svg><svg class="i24 push"><use href="#t-list"/></svg><svg class="i24"><use href="#t-win"/></svg><svg class="i24 push"><use href="#t-glass"/></svg>
    </div>
    <span class="titlesep"></span>
    <span class="doc-title">DELETE_SUPPRESS (活动的) - Creo Parametric 9.0</span>
  </div>
</header>

<nav class="tabs">
  <button class="tab file">文件</button>
  <button class="tab active">模型</button>
  <button class="tab">分析</button>
  <button class="tab">实时仿真</button>
  <button class="tab">注释</button>
  <button class="tab">人体模型</button>
  <button class="tab">工具</button>
  <button class="tab">视图</button>
  <button class="tab">框架</button>
  <button class="tab">应用程序</button>
</nav>

<section class="ribbon">
  <div class="group">
    <div class="tools">
      <button class="big"><svg><use href="#regen"/></svg>重新生成<i class="car"></i></button>
      <div class="stack">
        <button class="small"><svg><use href="#copy"/></svg>复制</button>
        <button class="small" disabled><svg><use href="#paste"/></svg>粘贴<i class="car"></i></button>
        <button class="small"><svg><use href="#del"/></svg>删除<i class="car"></i></button>
      </div>
    </div>
    <button class="glabel">操作<i class="car"></i></button>
  </div>
  <div class="group">
    <div class="tools">
      <div class="stack">
        <button class="small"><svg><use href="#udf"/></svg>用户定义特征</button>
        <button class="small"><svg><use href="#cgeom"/></svg>复制几何</button>
        <button class="small"><svg><use href="#shrink"/></svg>收缩包络</button>
      </div>
    </div>
    <button class="glabel">获取数据<i class="car"></i></button>
  </div>
  <div class="group">
    <div class="tools">
      <button class="big"><svg><use href="#assemble"/></svg>组装<i class="car"></i></button>
      <div class="stack">
        <button class="small"><svg><use href="#create"/></svg>创建<i class="car"></i></button>
        <button class="small"><svg><use href="#repeat"/></svg>重复</button>
        <button class="small"><svg><use href="#mirror"/></svg>镜像元件</button>
      </div>
      <span class="inner-sep"></span>
      <button class="big"><svg><use href="#drag"/></svg>拖动元件</button>
    </div>
    <button class="glabel">元件<i class="car"></i></button>
  </div>
  <div class="group">
    <div class="tools">
      <button class="big"><svg><use href="#bigplane"/></svg>平面</button>
      <div class="stack">
        <button class="small"><svg><use href="#axis"/></svg>轴</button>
        <button class="small"><svg><use href="#points"/></svg>点<i class="car"></i></button>
        <button class="small"><svg><use href="#csys"/></svg>坐标系</button>
      </div>
      <button class="big"><svg><use href="#sketch"/></svg>草绘</button>
    </div>
    <button class="glabel">基准<i class="car"></i></button>
  </div>
  <div class="group tight">
    <div class="tools">
      <div class="stack">
        <button class="small"><svg><use href="#hole"/></svg>孔</button>
        <button class="small"><svg><use href="#extrude"/></svg>拉伸</button>
        <button class="small"><svg><use href="#revolve"/></svg>旋转</button>
      </div>
    </div>
    <button class="glabel">切口和曲面<i class="car"></i></button>
  </div>
  <div class="group tight">
    <div class="tools">
      <button class="big"><svg><use href="#pattern"/></svg>阵列<i class="car"></i></button>
    </div>
    <button class="glabel">修饰符<i class="car"></i></button>
  </div>
  <div class="group">
    <div class="tools">
      <button class="big"><svg><use href="#mview"/></svg>管理视图<i class="car"></i></button>
      <button class="big"><svg><use href="#section"/></svg>截面<i class="car"></i></button>
      <button class="big"><svg><use href="#ball"/></svg>外观<i class="car"></i></button>
      <div class="stack">
        <button class="small"><svg><use href="#explode"/></svg>分解视图</button>
        <button class="small" disabled><svg><use href="#state"/></svg>切换状况</button>
        <button class="small"><svg><use href="#editpos"/></svg>编辑位置</button>
      </div>
      <button class="big"><svg><use href="#style"/></svg>显示样式<i class="car"></i></button>
      <button class="big"><svg><use href="#persp"/></svg>透视图</button>
    </div>
    <button class="glabel">模型显示<i class="car"></i></button>
  </div>
  <div class="group">
    <div class="tools">
      <button class="big"><svg><use href="#iface"/></svg>元件界面</button>
      <button class="big"><svg><use href="#publish"/></svg>发布几何</button>
      <button class="big"><svg><use href="#ftable"/></svg>族表</button>
      <div class="stack">
        <button class="small"><svg><use href="#params"/></svg>参数</button>
        <button class="small"><svg><use href="#swdim"/></svg>切换尺寸</button>
        <button class="small"><svg><use href="#rel"/></svg>关系</button>
      </div>
    </div>
    <button class="glabel">模型意图<i class="car"></i></button>
  </div>
  <div class="group">
    <div class="tools">
      <button class="big"><svg><use href="#bom"/></svg>物料清单</button>
      <button class="big"><svg><use href="#refv"/></svg>参考查看器</button>
    </div>
    <button class="glabel">调查<i class="car"></i></button>
  </div>
</section>

<main class="workspace">
  <aside class="sidebar">
    <div class="sidetabs">
      <button class="sidetab active" aria-label="模型树"><svg class="i24"><use href="#treetab"/></svg></button>
      <button class="sidetab" aria-label="文件夹浏览器"><svg class="i24"><use href="#folders"/></svg></button>
      <button class="sidetab" aria-label="收藏夹"><svg class="i24"><use href="#favfolder"/></svg></button>
    </div>
    <div class="panel">
      <div class="treetools">
        <button aria-label="零件"><svg class="i24"><use href="#greencube"/></svg></button><span class="grip"></span>
        <button class="ml" aria-label="全部展开"><svg class="i24"><use href="#expand"/></svg></button>
        <button aria-label="全部折叠"><svg class="i24"><use href="#collapse"/></svg></button>
        <button class="pressed" aria-label="显示列"><svg class="i24"><use href="#coleye"/></svg></button>
        <span class="vsep"></span>
        <button aria-label="树过滤器"><svg class="i24"><use href="#treefilter"/></svg></button>
        <button aria-label="树列"><svg class="i24"><use href="#coldoc"/></svg></button>
        <span class="vsep"></span>
        <button aria-label="设置"><svg class="i24"><use href="#gears"/></svg></button>
        <button class="more" aria-label="更多"><svg class="i24"><use href="#chev"/></svg></button>
        <button aria-label="显示"><svg class="i24"><use href="#doclist"/></svg></button>
      </div>
      <div class="search">
        <svg class="i24"><use href="#funnel"/></svg>
        <div class="field"><input type="text" aria-label="搜索"><button aria-label="清除"><svg class="clear"><use href="#clear"/></svg></button></div>
        <button aria-label="搜索选项"><i class="car"></i></button>
        <button class="add" aria-label="添加"><svg class="plus"><use href="#plus"/></svg></button>
      </div>
      <ul class="tree">
        <li class="root"><svg><use href="#asm"/></svg><span>DELETE_SUPPRESS.ASM</span></li>
        <li class="datum"><svg><use href="#plane"/></svg><span>ASM_RIGHT</span></li>
        <li class="datum"><svg><use href="#plane"/></svg><span>ASM_TOP</span></li>
        <li class="datum"><svg><use href="#plane"/></svg><span>ASM_FRONT</span></li>
        <li class="datum"><svg><use href="#csys-grey"/></svg><span>ASM_DEF_CSYS</span></li>
        <li><i class="tw"></i><svg><use href="#part"/></svg><span>GEARBOX_REAR_12.PRT</span></li>
        <li><i class="tw"></i><svg><use href="#part"/></svg><svg class="mk"><use href="#mk1"/></svg><span>PRIMARY_GEAR_SHAFT_12.PRT</span></li>
        <li><i class="tw"></i><svg><use href="#part"/></svg><svg class="mk"><use href="#mk1"/></svg><span>REDUCTION_GEAR_SHAFT_12.PRT</span></li>
        <li class="selected"><i class="tw"></i><svg><use href="#part"/></svg><span>GEARBOX_FRONT_12.PRT</span></li>
        <li><i class="tw"></i><svg><use href="#part"/></svg><svg class="mk"><use href="#mk1"/></svg><span>FINAL_GEAR_SHAFT_12.PRT</span></li>
        <li><i class="tw"></i><svg><use href="#asm"/></svg><svg class="mk wide"><use href="#mk2"/></svg><span>DRILL_CHUCK_12.ASM</span></li>
        <li><i class="tw"></i><svg><use href="#part"/></svg><span>BOLT_5-18_12.PRT</span></li>
        <li><i class="tw"></i><svg><use href="#part"/></svg><span>BOLT_5-18_12.PRT</span></li>
        <li><i class="tw"></i><svg><use href="#part"/></svg><span>BOLT_5-18_12.PRT</span></li>
        <li><i class="tw"></i><svg><use href="#part"/></svg><span>BOLT_5-18_12.PRT</span></li>
      </ul>
      <div class="insert-here"></div>
    </div>
  </aside>

  <section class="view">
    <div class="viewbar">
      <button aria-label="重新调整"><svg class="i24"><use href="#refit"/></svg></button>
      <button aria-label="放大"><svg class="i24"><use href="#zin"/></svg></button>
      <button aria-label="缩小"><svg class="i24"><use href="#zout"/></svg></button>
      <button aria-label="重画"><svg class="i24"><use href="#repaint"/></svg></button>
      <button aria-label="渲染"><svg class="i24"><use href="#render"/></svg></button>
      <button aria-label="显示样式"><svg class="i24"><use href="#dstyle"/></svg></button>
      <button aria-label="已保存方向"><svg class="i24"><use href="#orient"/></svg></button>
      <button aria-label="视图管理器"><svg class="i24"><use href="#mview"/></svg></button>
      <button aria-label="透视图"><svg class="i24"><use href="#persp"/></svg></button>
      <button aria-label="截面"><svg class="i24"><use href="#datum"/></svg></button>
      <button aria-label="基准显示"><svg class="i24"><use href="#dfilter"/></svg></button>
      <button class="pressed" aria-label="注释显示"><svg class="i24"><use href="#annot"/></svg></button>
      <button class="pressed" aria-label="旋转中心"><svg class="i24"><use href="#spin"/></svg></button>
      <button aria-label="仿真"><svg class="i24"><use href="#sim"/></svg></button>
      <button aria-label="暂停"><svg class="i24"><use href="#pause"/></svg></button>
      <button aria-label="结果"><svg class="i24"><use href="#last"/></svg></button>
    </div>

    <svg class="model" viewBox="0 0 1568 1380" preserveAspectRatio="none" role="img" aria-label="装配模型">
      <defs>
        <linearGradient id="mNose" x1="0" y1="0" x2="0" y2="1"><stop offset="0" stop-color="#8591a2"/><stop offset=".4" stop-color="#c3d0e4"/><stop offset="1" stop-color="#6c7686"/></linearGradient>
        <linearGradient id="mBody" x1="0" y1="0" x2="0" y2="1"><stop offset="0" stop-color="#8f9cae"/><stop offset=".4" stop-color="#a3afc1"/><stop offset=".8" stop-color="#8490a1"/><stop offset="1" stop-color="#9aa6ba"/></linearGradient>
        <linearGradient id="mCone" x1="0" y1="0" x2="0" y2="1"><stop offset="0" stop-color="#bcc0c6"/><stop offset=".22" stop-color="#c3cfd9"/><stop offset=".35" stop-color="#b6c3cd"/><stop offset=".43" stop-color="#9da4aa"/><stop offset=".47" stop-color="#b9c4cd"/><stop offset=".58" stop-color="#cbd8e3"/><stop offset=".72" stop-color="#aeb5bc"/><stop offset="1" stop-color="#c2c8ce"/></linearGradient>
        <linearGradient id="mHouse" x1="0" y1="0" x2="1" y2="1"><stop offset="0" stop-color="#a2acb4"/><stop offset=".5" stop-color="#afbfca"/><stop offset="1" stop-color="#a2adb6"/></linearGradient>
        <linearGradient id="mRim" x1="0" y1="0" x2="0" y2="1"><stop offset="0" stop-color="#dda93a"/><stop offset=".4" stop-color="#ffd56b"/><stop offset=".85" stop-color="#c39a42"/><stop offset=".9" stop-color="#8a7330"/></linearGradient>
        <linearGradient id="mDisc" x1="0" y1="0" x2="0" y2="1"><stop offset="0" stop-color="#d5c58f"/><stop offset=".4" stop-color="#dfca8b"/><stop offset=".75" stop-color="#c6b582"/><stop offset="1" stop-color="#a1976f"/></linearGradient>
        <linearGradient id="mFront" x1="0" y1="0" x2="0" y2="1"><stop offset="0" stop-color="#d8c68c"/><stop offset=".45" stop-color="#e3cf8e"/><stop offset="1" stop-color="#b5a679"/></linearGradient>
        <pattern id="teeth" width="60" height="17" patternUnits="userSpaceOnUse" patternTransform="rotate(-3)"><path d="M0 0h60v17H0z" fill="#848e96"/><path d="M0 11h60v4H0z" fill="#79838b"/></pattern>
        <pattern id="bolt" width="20" height="16" patternUnits="userSpaceOnUse"><path d="M0 0h20v16H0z" fill="#9a9ea2"/><path d="M0 9h20v4H0z" fill="#8b9094"/></pattern>
      </defs>
      <!-- chuck -->
      <path d="M105 520L187 515 262 560 270 860 190 875 115 882 52 838Q25 790 28 690 28 590 50 570z" fill="url(#mNose)"/>
      <path d="M105 520Q132 600 127 720 124 830 115 882L190 875 270 860 262 560 187 515z" fill="#8490a3"/>
      <path d="M105 520Q132 600 127 720 124 830 115 882" class="ln" stroke="#68727f"/>
      <path d="M50 570Q72 650 66 730 62 800 52 838" class="ln" stroke="#b5c1d3"/>
      <ellipse cx="42" cy="695" rx="11" ry="70" fill="#7d8899"/><path d="M36 630q15 10 12 65t-8 72" class="ln" stroke="#4f5965"/>
      <ellipse cx="165" cy="603" rx="26" ry="33" fill="#6b7585"/><ellipse cx="168" cy="606" rx="20" ry="27" fill="#4b545c"/><ellipse cx="172" cy="606" rx="12" ry="24" fill="#848fa1"/>
      <path d="M240 458L580 433 600 470 615 560 612 880 600 908 255 930 275 800 275 600z" fill="url(#mBody)"/>
      <g fill="#485051"><path d="M250 480L590 460v16L255 497zM262 543L600 514v30L268 570zM270 628L612 600v34L274 660zM275 722L615 698v36L276 756zM275 812L614 790v30L274 840z"/><path d="M268 884L612 860v20L266 906z" fill="#222a2b"/><path d="M242 457Q280 500 277 700 275 870 256 930 246 930 254 880 265 720 258 600 252 500 233 470z" fill="#3a4243"/></g>
      <path d="M250 500L590 480M262 900L600 878" class="ln" stroke="#6c7685"/>
      <g fill="#485051"><path d="M190 475l45 0 10 14-50 2zM185 510l65-20v20l-60 16zM188 548l66-20 4 22-56 22zM196 620l62-40v34zM198 663l62-36v40zM202 714l60-34v50zM202 764l60-24v44zM202 802l60-12v42zM198 840l62 8v36zM195 888l62-2v24z"/></g>
      <g fill="#a8b6cc"><path d="M180 480l10-2-12 46zM196 534l48-18-36 26zM198 650l56-42-46 20zM205 706l50-22-44 2zM207 755l46-12-40-2zM205 870l42 18-50-28z"/><path d="M188 880l22 34 30-4-30-6z" fill="#dce9fb"/></g>
      <!-- cone casing -->
      <path d="M600 412L945 258 1022 252Q1060 300 1072 500 1100 900 1100 1120 1095 1320 1068 1342L1000 1345 975 1325 615 920Q580 820 576 640 572 470 600 412z" fill="url(#mCone)" opacity=".94"/>
      <path d="M600 412L945 258 960 300 640 450 630 560 576 560Q574 470 600 412z" fill="#b4b8bd" opacity=".5"/>
      <path d="M620 850L900 1040 1020 1200 1000 1345 975 1325 615 920z" fill="#a6abb1" opacity=".45"/>
      <path d="M580 600l30-4v34h-30zM580 700l32-3v36l-30 3z" fill="#3f474a" opacity=".6"/>
      <path d="M580 520l24-4v28h-24zM585 460l8 0v18h-8z" fill="#3f474a" opacity=".7"/>
      <path d="M612 596l30 20v120l-30 0z" fill="#7d8489" opacity=".6"/>
      <path d="M580 790l32 0v28h-32zM586 862h24v20h-22z" fill="#2e3637" opacity=".7"/>
      <!-- rear housing -->
      <path d="M1022 252L1166 247 1182 130 1197 52 1297 45 1340 195 1387 190 1424 208 1440 320Q1468 460 1466 640L1455 990 1415 1040 1345 1042 1300 1022 1285 995 1262 1005 1195 1290 1165 1332 1068 1342Q1095 1300 1100 1120 1098 700 1072 500 1060 300 1022 252z" fill="url(#mHouse)" opacity=".55"/>
      <g fill="#a4b4bf" opacity=".4"><path d="M1200 85l98-9v72l-94 7zM1180 250l65-8 10-60 60 10 50 0 50 40v70l-165 15zM1060 290l140-8Q1240 400 1245 560l-130 50zM1100 720l160-20v240l-60 80-60-60zM1130 1000l100-30-50 250-50 70h-40zM1300 930l150-20v80l-110 50z"/><path d="M1166 247L1195 60 1255 240 1230 280zM1250 250l170-12v70l-170 12z"/></g>
      <!-- gears and shafts -->
      <path d="M880 390l80-12 34 40-4 70-110 0q-14-50 0-98z" fill="#80888e"/><path d="M870 440l70 5v100l-50-10z" fill="#7a7e86" opacity=".8"/>
      <path d="M880 520l40 0 10 300-20 60Q860 700 880 520z" fill="#9aa4ac" opacity=".7"/>
      <path d="M920 560L1010 545 1020 1000 940 1030 905 800z" fill="url(#teeth)"/>
      <path d="M1020 700h76q34 160 40 250 0 80-20 110l-100-10-10-200z" fill="url(#teeth)"/>
      <path d="M1035 1110l85 0q0 80-12 108l-75 4z" fill="#73797d"/><path d="M1050 1120v100M1065 1120v100M1080 1120v98M1095 1120v98" class="ln" stroke="#666c70"/>
      <path d="M1000 1030l115-10 8 95-110 50z" fill="#7a8084"/>
      <path d="M800 925l110-5v110l-110-8z" fill="#989fa5" opacity=".8"/>
      <path d="M1012 455l136-8v54l-136 8z" fill="url(#bolt)"/><path d="M952 455l40-5q6 40-2 82l-34 2q-10-40-4-79z" fill="#82888c"/><ellipse cx="958" cy="492" rx="8" ry="40" fill="#73797d"/>
      <path d="M1022 1074l150-6v52l-150 10z" fill="url(#bolt)"/><path d="M975 1075l42-6q8 40 0 84l-42 2q-8-40 0-80z" fill="#777c80"/><ellipse cx="981" cy="1112" rx="8" ry="40" fill="#5f6568"/>
      <path d="M1130 900l100-6q6 50-4 104l-84 6z" fill="#8a949b" opacity=".8"/>
      <path d="M1012 575l190-12 60 20v105l-250 12z" fill="#ddcd98"/><path d="M1014 600h80M1014 625h80M1014 645h80M1014 668h80" class="ln" stroke="#b8a766"/>
      <!-- gold flange -->
      <path d="M1432 320l43-2Q1518 420 1518 660 1514 850 1498 902L1445 904z" fill="url(#mRim)"/>
      <path d="M1428 386l67-4M1450 838l62-4" class="ln" stroke="#7f672b"/>
      <path d="M1245 490l75-6 20 60v210l-90 4Q1225 620 1245 490z" fill="#cdba7f"/>
      <path d="M1305 340Q1330 325 1440 320 1468 450 1466 640 1462 820 1450 902L1335 908Q1310 880 1298 720L1340 700V520L1290 490Q1290 380 1305 340z" fill="url(#mFront)"/>
      <path d="M1365 325Q1425 420 1428 640 1420 840 1400 905L1450 902Q1468 760 1466 640 1464 430 1440 320z" fill="url(#mDisc)" opacity=".9"/>
      <path d="M1255 490q20 70 30 68l60 4q20 0 24 34" class="ln" stroke="#b3a36f"/><path d="M1340 540v160" class="ln" stroke="#b09f6a"/>
      <g class="ln" stroke="#98a5af" opacity=".7"><path d="M1197 52Q1190 140 1255 240M1297 45l8 100M1220 300Q1270 450 1262 560M1255 240Q1290 330 1300 500M1305 195l95 10 20 60M1250 250l170-12M1250 320l170-14M1130 840l130-90M1130 900l120-70M1255 965l200-15M1240 1000l200-10M1060 290l140-8M1045 390l65-8M1145 1240l-5-150M1110 1295l55-10"/><path d="M1424 240Q1460 500 1446 800M1166 247L1197 52 1297 45 1340 195M1262 1005L1195 1290 1165 1332M1300 1022l45 20h70l40-52"/></g>
      <path d="M1150 562Q1200 530 1250 562 1290 600 1286 680 1270 770 1190 775 1110 765 1102 660 1105 590 1150 562z" fill="#d3cda9" fill-opacity=".5" stroke="#8e9ba3" class="v"/>
      <path d="M1155 575Q1200 545 1245 572 1278 610 1274 680 1260 758 1190 762 1120 755 1113 660 1116 600 1155 575z" fill="none" stroke="#a9b3b8" class="v"/>
      <ellipse cx="1192" cy="655" rx="48" ry="52" fill="#bac4c8" stroke="#a4afb6" class="v"/><ellipse cx="1208" cy="652" rx="34" ry="44" fill="#c3bd9b"/>
      <!-- highlighted edges -->
      <g class="wire" transform="translate(582.4 210) scale(.7467 1)">
        <path d="M0 238Q15 200 34 201L490 46 594 42Q635 60 653 220 680 430 685 620 695 800 697 900 690 1080 655 1132L555 1136 520 1115 40 705Q16 690 5 470 0 330 20 225"/>
        <path d="M34 201Q60 230 72 350 84 460 82 640L74 672"/><path d="M20 225Q36 205 46 240L68 350M10 250Q22 215 34 250 50 330 48 500 45 620 20 640M5 400Q12 560 40 680L60 700M26 380v170M38 390v190M52 380v260M8 260Q-4 380 10 540T40 705M16 380L22 560M60 400L66 660"/>
        <path d="M20 230L245 152 480 62M36 226L250 156M245 152h125M250 158h125M245 145L480 78M250 148L495 96M35 252L370 240 375 145 383 150V220M62 252h90"/>
        <path d="M442 170Q455 60 490 48 530 50 548 200 570 450 585 640 600 900 598 1000M450 200Q465 80 500 62 520 70 540 190M442 170Q430 300 440 470 455 700 480 850L490 950M448 180Q440 320 450 500 465 700 485 880M458 160Q470 70 506 56 535 90 552 240"/>
        <path d="M594 44Q560 60 556 90M480 70L590 66V64h10v60l-10 8V70M490 90h100M500 96h95M500 100h90M555 108h40M440 142L550 138 588 134M560 165L640 160M560 196L646 193M560 220L645 217M560 235L650 236M645 200Q645 250 650 300T665 356M650 236q8 0 8 26t-8 30M560 240h90M560 262h95M560 290h90M545 310h100M545 345L668 338M545 360h125"/>
        <path d="M150 320Q180 280 280 240L530 170M155 330Q190 290 300 240L540 178M160 315L530 184M240 300L530 190M240 320Q230 290 260 280M150 330Q145 355 170 370M155 335Q200 400 290 403L445 398 570 396M240 300Q240 330 260 340L440 340M250 310L420 262M280 230L410 230M250 290L440 240M250 305L440 300M300 330L440 320M220 345L440 335M170 310L300 252 540 200M270 260L530 176"/>
        <path class="b" d="M20 385L440 372M0 380L340 366M74 372L560 358M80 345L420 300M370 225L540 175M380 232L450 212"/>
        <path d="M10 350L160 325 450 300M10 365L250 320M0 360L380 300M20 375L400 320M74 340L440 250M74 350L430 345M74 362L460 350M74 378L470 360M250 370L200 340M330 350Q345 330 350 370M340 345v30M0 372L300 335M40 345L440 318M80 356L520 340M60 368L440 330M180 370L440 365M200 352L560 344"/>
        <path class="b" d="M548 170Q540 250 556 330L575 600 598 950M440 300L436 480M375 230L445 220M568 360L592 840M446 300L438 420 446 600"/>
        <path d="M550 180Q560 300 570 480M562 260L590 640 604 960M365 370L362 400 368 500 420 700M378 370L385 470 395 540 440 565 465 575Q470 555 460 550L380 500M400 330L410 470M420 340L425 520 400 555M445 600L430 550M430 340L436 520M410 330L420 560M452 310L444 560 470 860"/>
        <path d="M20 540L370 512M20 530L430 505M40 520L430 530M60 545L420 540M80 520L380 575M80 530L460 590M74 550L350 600M76 560L340 615M80 575L345 622M70 600L460 585M70 612L400 598M345 622Q355 590 352 560L440 560M335 625Q345 600 340 575M352 618Q362 580 385 500M20 545L76 560 350 570M80 540L350 585M70 536L430 515M80 548L400 582"/>
        <path class="b" d="M70 525L370 515M80 530L250 535M240 570L350 585M345 620L355 580M40 522L160 524"/>
        <path d="M60 645L280 740 400 800M66 655L270 765 410 820M74 665L240 790 420 840M50 665L120 738 220 810M110 738L240 722 420 706M275 715v95M290 712v95M275 715L420 706 436 712M60 690L260 860 420 990M45 700L230 840 410 960M74 680L250 810 420 900M80 690L250 870 440 1020M120 735L270 880 480 1060M40 690L270 890 500 1090M150 770L420 1000 500 1080M200 810L420 965 530 1090M230 840L420 1000M210 812L440 800 695 805M230 820L420 815 690 822M275 765L400 810M290 740L410 800M46 685L200 800 430 860M56 700L300 905 530 1105M64 668L200 770 340 850M100 710L330 880 470 1010M300 850L420 900M180 760L410 870"/>
        <path d="M260 880L440 870M240 870L480 885M250 845L440 850M330 850Q350 870 340 880L370 910M380 830L375 910 360 900M340 880Q370 860 400 880M355 860L430 890 580 960M370 890L440 900 580 970M400 700L408 890 415 990M425 710L430 880 440 1010M410 800L480 870 490 930M430 780L470 900M395 820L460 880M232 810v30M240 815Q270 850 270 878M390 800L386 880 420 980M400 790Q440 830 440 870"/>
        <path class="b" d="M410 820L414 990M480 850L580 840 600 870V1000M340 876L430 874M485 880L490 940M578 840V930M430 880L480 888M390 820L440 850M420 840L480 862M340 880L400 870"/>
        <path d="M440 825L590 830M440 840L595 860M440 865h240M590 862L600 930M610 866L690 862V920L610 925M600 900h90M550 937L695 930M560 950L690 945M595 990h95M510 980L500 1040M510 980h90M488 940Q480 1010 530 1090L550 1110M490 940Q500 1020 540 1100M500 930Q560 1010 590 1110M480 960L600 1010M600 1040L650 1040V1100L540 1105M650 1040q10 30 0 60M540 1070h110M545 1085h108M560 1112h90M600 1010L640 1125M600 960Q590 1080 570 1130M580 950Q575 1060 545 1115M440 1015L540 1110M420 990L500 1080M480 838h100M484 846h104M500 856h96"/>
        <path class="b" d="M530 1080L650 1078M540 1095L600 1092M596 960L600 1010M488 940L492 990"/>
      </g>
      <path d="M762 688L765 790" class="ln" stroke="#2ee22e"/><path d="M765 796L686 802" class="ln" stroke="#2fe8ee"/>
      <ellipse cx="761" cy="687" rx="4" ry="5" fill="#2ee22e"/><ellipse cx="686" cy="802" rx="4" ry="5" fill="#2fe8ee"/><ellipse cx="778" cy="794" rx="6" ry="7" fill="#f33"/>
    </svg>
  </section>

  <div class="minibar">
    <div class="minirow">
      <button aria-label="激活"><svg class="i24"><use href="#activate"/></svg></button>
      <button aria-label="打开"><svg class="i24"><use href="#openf"/></svg></button>
      <button aria-label="编辑定义"><svg class="i24"><use href="#editdef"/></svg></button>
      <button aria-label="编辑参考"><svg class="i24"><use href="#chain"/></svg></button>
      <button class="hot" aria-label="隐含"><svg class="i24"><use href="#suppress"/></svg></button>
      <button aria-label="阵列"><svg class="i24"><use href="#patmini"/></svg></button>
      <button aria-label="选择父项"><svg class="i24"><use href="#selparent"/></svg></button>
      <button class="drop" aria-label="更多"><i class="car"></i></button>
    </div>
    <div class="minirow second">
      <button aria-label="缩放至选定项"><svg class="i24"><use href="#zoomsel"/></svg></button>
      <button aria-label="隐藏"><svg class="i24"><use href="#hide"/></svg></button>
      <button aria-label="仅显示"><svg class="i24"><use href="#show"/></svg></button>
      <button aria-label="全部隐藏"><svg class="i24"><use href="#hideall"/></svg></button>
    </div>
  </div>
  <div class="tip" role="tooltip">
    <div class="tip-head"><svg class="i24"><use href="#suppress"/></svg><strong>隐含</strong></div>
    <p>隐含选定特征。</p>
  </div>
  <div class="mark mark-button"></div>
  <div class="mark mark-tip"></div>
</main>
</body>
</html>
```

FILE: styles.css
```css
*, *::before, *::after { box-sizing: border-box; }
body {
  margin: 0;
  min-height: 100vh;
  display: flex;
  flex-direction: column;
  overflow: hidden;
  background: #e8eaee;
  color: #35393c;
  font: 300 18px/24px "Noto Sans CJK SC", sans-serif;
}
button {
  padding: 0;
  border: 0;
  background: none;
  color: inherit;
  font: inherit;
  white-space: nowrap;
}
svg { display: block; flex: none; overflow: visible; }
.defs { position: absolute; width: 0; height: 0; }
.i24 { width: 24px; height: 24px; }
.car {
  display: block;
  flex: none;
  width: 11px;
  height: 7px;
  background: #6a6c6e;
  clip-path: polygon(0 0, 100% 0, 50% 100%);
}

/* title bar */
.titlebar {
  height: 16px;
  flex: none;
  overflow: hidden;
  display: flex;
  align-items: flex-end;
  background: #dae0df;
}
.titlebar-inner {
  position: relative;
  flex: 1 0 auto;
  height: 40px;
  padding-left: 11px;
  display: flex;
  align-items: center;
}
.brand { margin-left: 6px; font: bold 26px/24px "Open Sans", sans-serif; color: #555; width: 54px; height: 28px; }
.quick { display: flex; gap: 12px; margin-left: 32px; }
.quick.far { margin-left: 35px; }
.quick .push { margin-left: 18px; }
.titlesep { width: 1px; height: 34px; margin-left: 10px; background: #a8adad; }
.doc-title {
  position: absolute;
  left: 1048px;
  font: 600 20px/24px "Open Sans", "Noto Sans CJK SC", sans-serif;
  color: #3e4647;
}

/* tab strip */
.tabs {
  flex: none;
  height: 45px;
  padding-top: 4px;
  display: flex;
  background: #3e4647;
}
.tab { padding: 0 34px 2px 33px; font-size: 20px; color: #fff; }
.tab.file { width: 100px; padding: 0 0 2px; background: linear-gradient(165deg, #67d144, #52a437); }
.tab.active { background: #f8fafc; color: #3a7a22; }

/* ribbon */
.ribbon {
  flex: none;
  display: flex;
  height: 164px;
  padding: 2px 0;
  background: #f8fafc;
  border-bottom: 1px solid #a9bcbe;
}
.group {
  display: flex;
  flex-direction: column;
  align-items: center;
  justify-content: space-between;
  padding: 0 9px 0 10px;
  border-right: 1px solid #b4b8bb;
}
.group.tight { padding: 0 7px 0 8px; }
.tools { display: flex; gap: 12px; padding-top: 6px; }
.big {
  display: flex;
  flex-direction: column;
  align-items: center;
  min-width: 48px;
  max-width: 72px;
  height: 112px;
  white-space: normal;
}
.big svg { width: 48px; height: 48px; margin-bottom: 12px; }
.big .car { margin-top: 9px; }
.stack { display: flex; flex-direction: column; gap: 16px; }
.small { display: flex; align-items: center; gap: 6px; height: 24px; }
.small svg { width: 24px; height: 24px; }
.small .car { margin-left: 5px; }
.small:disabled { color: #a8aaac; }
.small:disabled .car { background: #a9abad; }
.inner-sep { width: 1px; height: 121px; margin: -6px -2px 0; background: #c2c6c8; }
.glabel { display: flex; align-items: center; gap: 6px; height: 34px; }

/* workspace */
.workspace { position: relative; flex: 1; display: flex; min-height: 0; }
.sidebar { flex: none; width: 404px; display: flex; flex-direction: column; background: #dae0df; }
.sidetabs { display: flex; height: 38px; }
.sidetab { width: 46px; display: flex; justify-content: center; align-items: center; }
.sidetab.active { width: 47px; padding-left: 3px; background: #f8fafc; }
.panel { flex: 1; margin-right: 4px; background: #f8fafc; }
.treetools { display: flex; align-items: center; gap: 12px; height: 48px; padding-left: 16px; }
.treetools .pressed {
  display: flex; align-items: center; justify-content: center;
  width: 36px; height: 36px; margin: 0 -6px 0 -5px;
  background: #dfe0e3; border: 1px solid #a9abad;
}
.grip { width: 3px; height: 24px; margin: 0 4px 0 -5px; border-left: 3px dotted #b5b7b8; }
.treetools .ml { margin-left: 13px; }
.treetools .more { margin-left: 8px; }
.vsep { width: 1px; height: 36px; background: #a9abad; }
.search { display: flex; align-items: center; height: 42px; padding-left: 18px; }
.field {
  display: flex; align-items: center;
  width: 281px; height: 42px; margin: 0 8px 0 6px; padding-right: 7px;
  background: #fff; border: 1px solid #a3b0b1;
}
.field input { flex: 1; min-width: 0; height: 38px; padding: 0 8px; border: 0; outline: 0; background: none; font: inherit; }
.clear { width: 14px; height: 14px; }
.plus { width: 18px; height: 18px; }
.add { margin-left: 17px; }

.tree {
  list-style: none;
  margin: 0;
  padding: 7px 0 0;
  font: 400 19px/27px "Noto Sans", "Open Sans", sans-serif;
  color: #505254;
}
.tree li { position: relative; display: flex; align-items: center; height: 30px; padding-left: 25px; white-space: nowrap; }
.tree svg { width: 22px; height: 22px; margin-right: 8px; }
.tree .root { padding-left: 17px; }
.tree .datum { padding-left: 46px; color: #bdb59c; }
.tree .datum svg { margin-right: 9px; }
.tree .tw { width: 11px; height: 14px; margin-right: 11px; background: #8a8a8a; clip-path: polygon(0 0, 100% 50%, 0 100%); }
.tree svg.mk { width: 8px; height: 12px; margin: 0 2px 6px 0; }
.tree svg.mk.wide { width: 11px; height: 14px; }
.selected span { margin-left: -1px; padding: 0 1px; background: #aee1ff; outline: 1px dotted #333; }
.selected::after {
  content: "";
  position: absolute;
  left: 24px;
  top: -9px;
  width: 305px;
  height: 43px;
  border: 5px solid #ef1c24;
  border-radius: 4px;
}
.insert-here {
  margin: 6px 7px 0 16px;
  height: 10px;
  border: solid #55bb35;
  border-width: 0 1px;
  background: linear-gradient(#0000 3px, #a4dc93 3px, #a4dc93 5px, #5cc23b 5px, #5cc23b 8px, #0000 8px);
}

/* graphics area */
.view { position: relative; flex: 1; overflow: hidden; }
.viewbar {
  position: absolute;
  left: 43%;
  top: 7px;
  display: flex;
  gap: 3px;
  padding: 5px 4px;
  background: #f8fafc;
  border: 1px solid #999c9f;
}
.viewbar button { display: flex; align-items: center; justify-content: center; width: 35px; height: 35px; }
.viewbar .pressed { background: #e0e1e4; border: 1px solid #a9abad; }
.model { position: absolute; left: 736px; top: 345px; width: 700px; height: 460px; }
.ln { fill: none; stroke-width: 1; vector-effect: non-scaling-stroke; }
.ln path, .v { vector-effect: non-scaling-stroke; }
.wire path { fill: none; stroke: #00c400; stroke-width: 1; vector-effect: non-scaling-stroke; }
.wire path.b { stroke-width: 2; }

/* floating mini toolbar and tip */
.minibar {
  position: absolute;
  left: 169px;
  top: 242px;
  width: 277px;
  background: #fafbfc;
  border: 1px solid #a9abad;
  box-shadow: 3px 3px 3px #0006;
}
.minirow { display: flex; align-items: center; height: 39px; padding-left: 1px; }
.minirow.second { border-top: 1px solid #dcdee0; height: 41px; }
.minirow button { display: flex; align-items: center; justify-content: center; width: 36px; height: 36px; }
.minirow .drop { width: 20px; }
.minirow .hot { background: #cdeeff; border: 1px solid #9bd3ee; }
.tip {
  position: absolute;
  left: 330px;
  top: 282px;
  width: 169px;
  height: 98px;
  padding: 21px 0 0 20px;
  background: #fff;
  border: 1px solid #a9d8ea;
  box-shadow: 3px 3px 3px #0007;
  color: #222;
}
.tip-head { display: flex; align-items: center; gap: 11px; }
.tip-head strong { font-size: 18px; font-weight: 700; }
.tip p { margin: 10px 0 0; }
.mark { position: absolute; border: 5px solid #ef1c24; border-radius: 4px; pointer-events: none; }
.mark-button { left: 309px; top: 231px; width: 44px; height: 57px; }
.mark-tip { left: 340px; top: 281px; width: 167px; height: 101px; }
```
